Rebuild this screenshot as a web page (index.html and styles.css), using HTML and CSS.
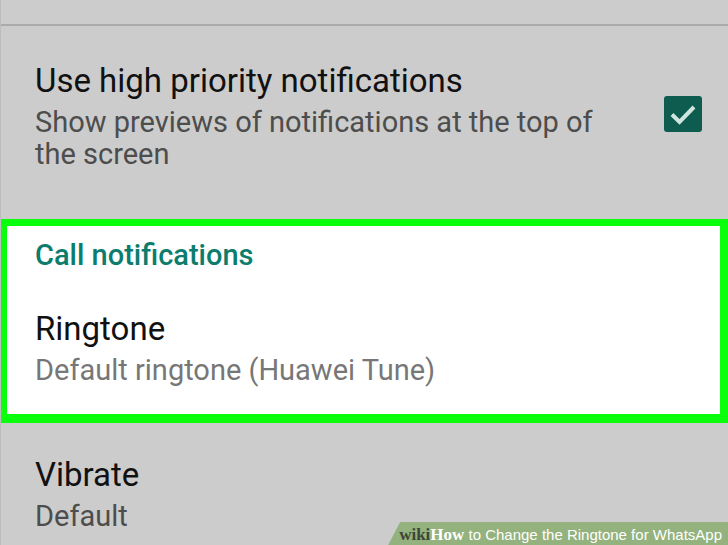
FILE: index.html
```html
<!DOCTYPE html>
<html>
<head>
  <meta charset="utf-8">
  <title>Notifications</title>
  <link rel="stylesheet" href="styles.css">
</head>
<body>
  <div class="screen">
    <div class="divider"></div>
    <div class="pref pref-check">
      <div class="pref-text">
        <div class="title">Use high priority notifications</div>
        <div class="summary">Show previews of notifications at the top of the screen</div>
      </div>
      <div class="checkbox">
        <svg width="38" height="36" viewBox="0 0 38 36">
          <rect x="0" y="0" width="38" height="36" rx="3" fill="#0e5c4f"/>
          <path d="M8 18.5 L15.5 26 L30 11" fill="none" stroke="#cfe6e0" stroke-width="4"/>
        </svg>
      </div>
    </div>
    <div class="highlight">
      <div class="category">Call notifications</div>
      <div class="pref">
        <div class="title">Ringtone</div>
        <div class="summary light">Default ringtone (Huawei Tune)</div>
      </div>
    </div>
    <div class="pref pref-last">
      <div class="title">Vibrate</div>
      <div class="summary">Default</div>
    </div>
    <div class="banner"><span class="wiki">wiki</span><span class="how">How</span> to Change the Ringtone for WhatsApp</div>
  </div>
</body>
</html>
```

FILE: styles.css
```css
body {
  margin: 0;
  background-color: #cccccc;
  font-family: Roboto, "Noto Sans", sans-serif;
}
.screen {
  position: relative;
  width: 728px;
  height: 545px;
  overflow: hidden;
  background-color: #cccccc;
  border-left: 1px solid #bdbdbd;
  box-sizing: border-box;
}
.divider {
  margin-top: 24px;
  height: 2px;
  background-color: #ababab;
}
.pref {
  padding-left: 34px;
}
.pref-check {
  display: flex;
  align-items: flex-start;
  padding-top: 35px;
  padding-bottom: 49px;
  padding-right: 26px;
}
.pref-text {
  flex: 1;
}
.checkbox {
  display: flex;
  margin-left: 30px;
  margin-top: 35px;
}
.title {
  font-size: 33px;
  line-height: 40px;
  color: #111111;
}
.summary {
  margin-top: 5px;
  font-size: 29px;
  line-height: 32px;
  color: #4d4d4d;
}
.summary.light {
  color: #777777;
}
.highlight {
  margin-left: -1px;
  width: 728px;
  box-sizing: border-box;
  background-color: #ffffff;
  border-style: solid;
  border-color: #09ff0c;
  border-width: 7px 8px 9px 7px;
  padding-top: 13px;
  padding-bottom: 28px;
}
.highlight .pref {
  padding-left: 28px;
}
.category {
  padding-left: 28px;
  font-size: 29px;
  font-weight: 500;
  line-height: 32px;
  color: #0c7d6d;
  margin-bottom: 38px;
}
.pref-last {
  padding-top: 32px;
}
.banner {
  position: absolute;
  right: 0;
  bottom: 0;
  height: 23px;
  padding: 0 6px 0 11px;
  background-color: #93b27d;
  clip-path: polygon(12px 0, 100% 0, 100% 100%, 0 100%);
  color: #ffffff;
  font-family: "Liberation Sans", sans-serif;
  font-size: 15px;
  line-height: 25px;
}
.wiki, .how {
  font-family: "Liberation Serif", serif;
  font-weight: bold;
  font-size: 17px;
}
.wiki {
  color: #3d4637;
}
```
